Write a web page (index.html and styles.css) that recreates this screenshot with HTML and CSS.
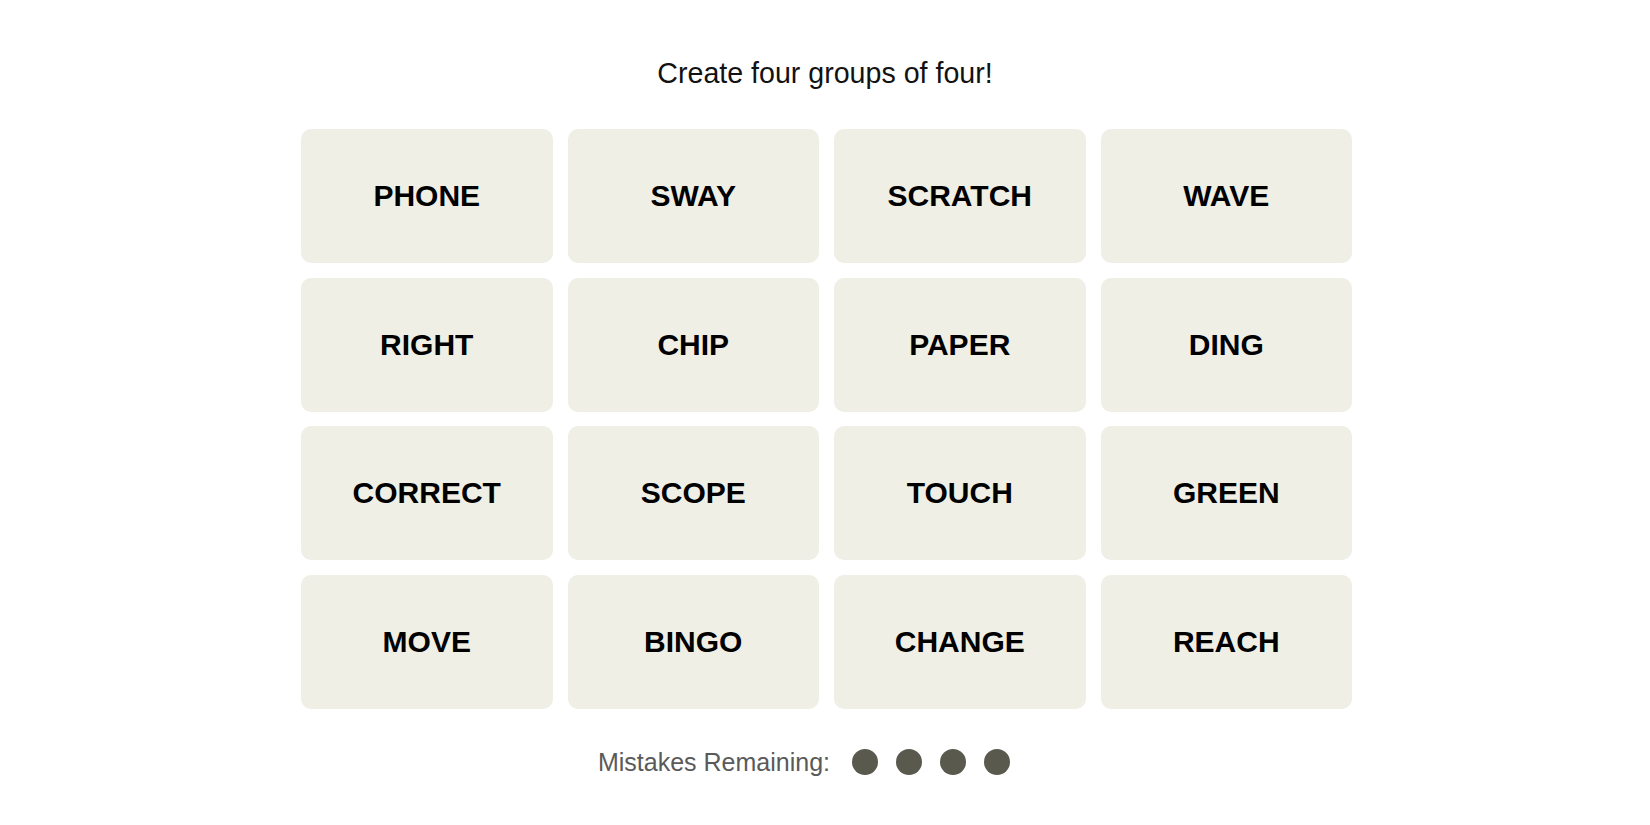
FILE: index.html
```html
<!DOCTYPE html>
<html lang="en">
<head>
<meta charset="utf-8">
<title>Connections</title>
<link rel="stylesheet" href="styles.css">
</head>
<body>
<main class="game">
  <h1 class="prompt">Create four groups of four!</h1>
  <section class="board">
    <button class="tile">PHONE</button>
    <button class="tile">SWAY</button>
    <button class="tile">SCRATCH</button>
    <button class="tile">WAVE</button>
    <button class="tile">RIGHT</button>
    <button class="tile">CHIP</button>
    <button class="tile">PAPER</button>
    <button class="tile">DING</button>
    <button class="tile">CORRECT</button>
    <button class="tile">SCOPE</button>
    <button class="tile">TOUCH</button>
    <button class="tile">GREEN</button>
    <button class="tile">MOVE</button>
    <button class="tile">BINGO</button>
    <button class="tile">CHANGE</button>
    <button class="tile">REACH</button>
  </section>
  <div class="mistakes">
    <span class="mistakes-label">Mistakes Remaining:</span>
    <span class="dots">
      <span class="dot"></span>
      <span class="dot"></span>
      <span class="dot"></span>
      <span class="dot"></span>
    </span>
  </div>
</main>
</body>
</html>
```
FILE: styles.css
```css
html, body {
  margin: 0;
  padding: 0;
  background: #ffffff;
}

.game {
  display: flex;
  flex-direction: column;
  align-items: center;
  padding-top: 59px;
  font-family: "Liberation Sans", Arial, sans-serif;
}

.prompt {
  margin: 0;
  font-size: 28.6px;
  line-height: 28px;
  font-weight: 400;
  color: #121212;
}

.board {
  margin-top: 42px;
  margin-left: 3px;
  width: 1051px;
  display: grid;
  grid-template-columns: repeat(4, 1fr);
  grid-auto-rows: 134px;
  column-gap: 15px;
  row-gap: 14.5px;
}

.tile {
  border: none;
  margin: 0;
  padding: 0;
  background: #efefe6;
  border-radius: 10px;
  display: flex;
  align-items: center;
  justify-content: center;
  font-family: "Liberation Sans", Arial, sans-serif;
  font-size: 30px;
  font-weight: 700;
  color: #000000;
  cursor: pointer;
}

.mistakes {
  margin-top: 42px;
  display: flex;
  align-items: center;
  height: 27px;
  padding-right: 42px;
}

.mistakes-label {
  font-size: 25px;
  line-height: 27px;
  margin-bottom: 4px;
  color: #5a5a5a;
}

.dots {
  display: flex;
  gap: 18px;
  margin-left: 22px;
  margin-bottom: 4px;
}

.dot {
  width: 26px;
  height: 26px;
  border-radius: 50%;
  background: #5a594e;
}
```
